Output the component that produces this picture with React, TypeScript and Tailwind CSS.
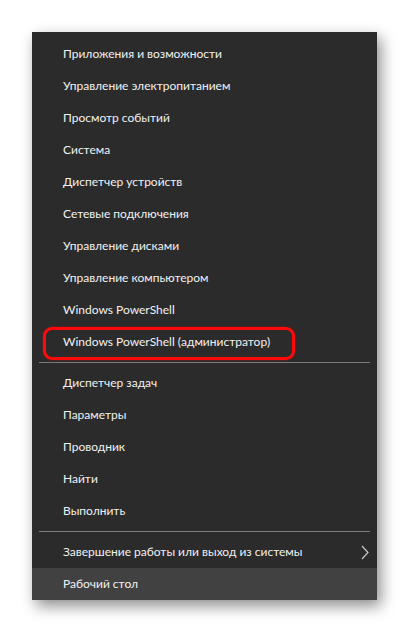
const groups = [
  [
    "Приложения и возможности",
    "Управление электропитанием",
    "Просмотр событий",
    "Система",
    "Диспетчер устройств",
    "Сетевые подключения",
    "Управление дисками",
    "Управление компьютером",
    "Windows PowerShell",
    "Windows PowerShell (администратор)",
  ],
  ["Диспетчер задач", "Параметры", "Проводник", "Найти", "Выполнить"],
]

function Row({ label, active, marked }: { label: string; active?: boolean; marked?: boolean }) {
  return (
    <div className={`relative flex h-8 items-center pl-[31px] ${active ? "bg-[#414141]" : ""}`}>
      <span>{label}</span>
      {marked && (
        <span className="absolute left-[11px] top-[1px] h-[33px] w-[252px] rounded-[9px] border-[3px] border-[#ff0a0a] shadow-[0_0_2px_rgba(255,10,10,0.6)]" />
      )}
    </div>
  )
}

export default function App() {
  return (
    <div className="h-[634px] w-[409px] bg-white pl-8 pt-8 font-['Lato',sans-serif] text-[12px] text-[#f2f2f2]">
      <div className="w-[345px] bg-[#2b2b2b] pt-[6px] shadow-[4px_6px_14px_rgba(0,0,0,0.45)]">
        {groups.map((g, gi) => (
          <div key={gi}>
            {g.map((label) => (
              <Row key={label} label={label} marked={label.includes("администратор")} />
            ))}
            <div className="flex h-[9px] items-center px-[7px]">
              <div className="h-px w-full bg-[#7a7a7a]" />
            </div>
          </div>
        ))}
        <div className="flex h-8 items-center justify-between pl-[31px] pr-[8px]">
          <span>Завершение работы или выход из системы</span>
          <svg width="8" height="15" viewBox="0 0 8 15" fill="none">
            <path d="M1 1l6 6.5L1 14" stroke="#c8c8c8" strokeWidth="1.2" />
          </svg>
        </div>
        <Row label="Рабочий стол" active />
      </div>
    </div>
  )
}
